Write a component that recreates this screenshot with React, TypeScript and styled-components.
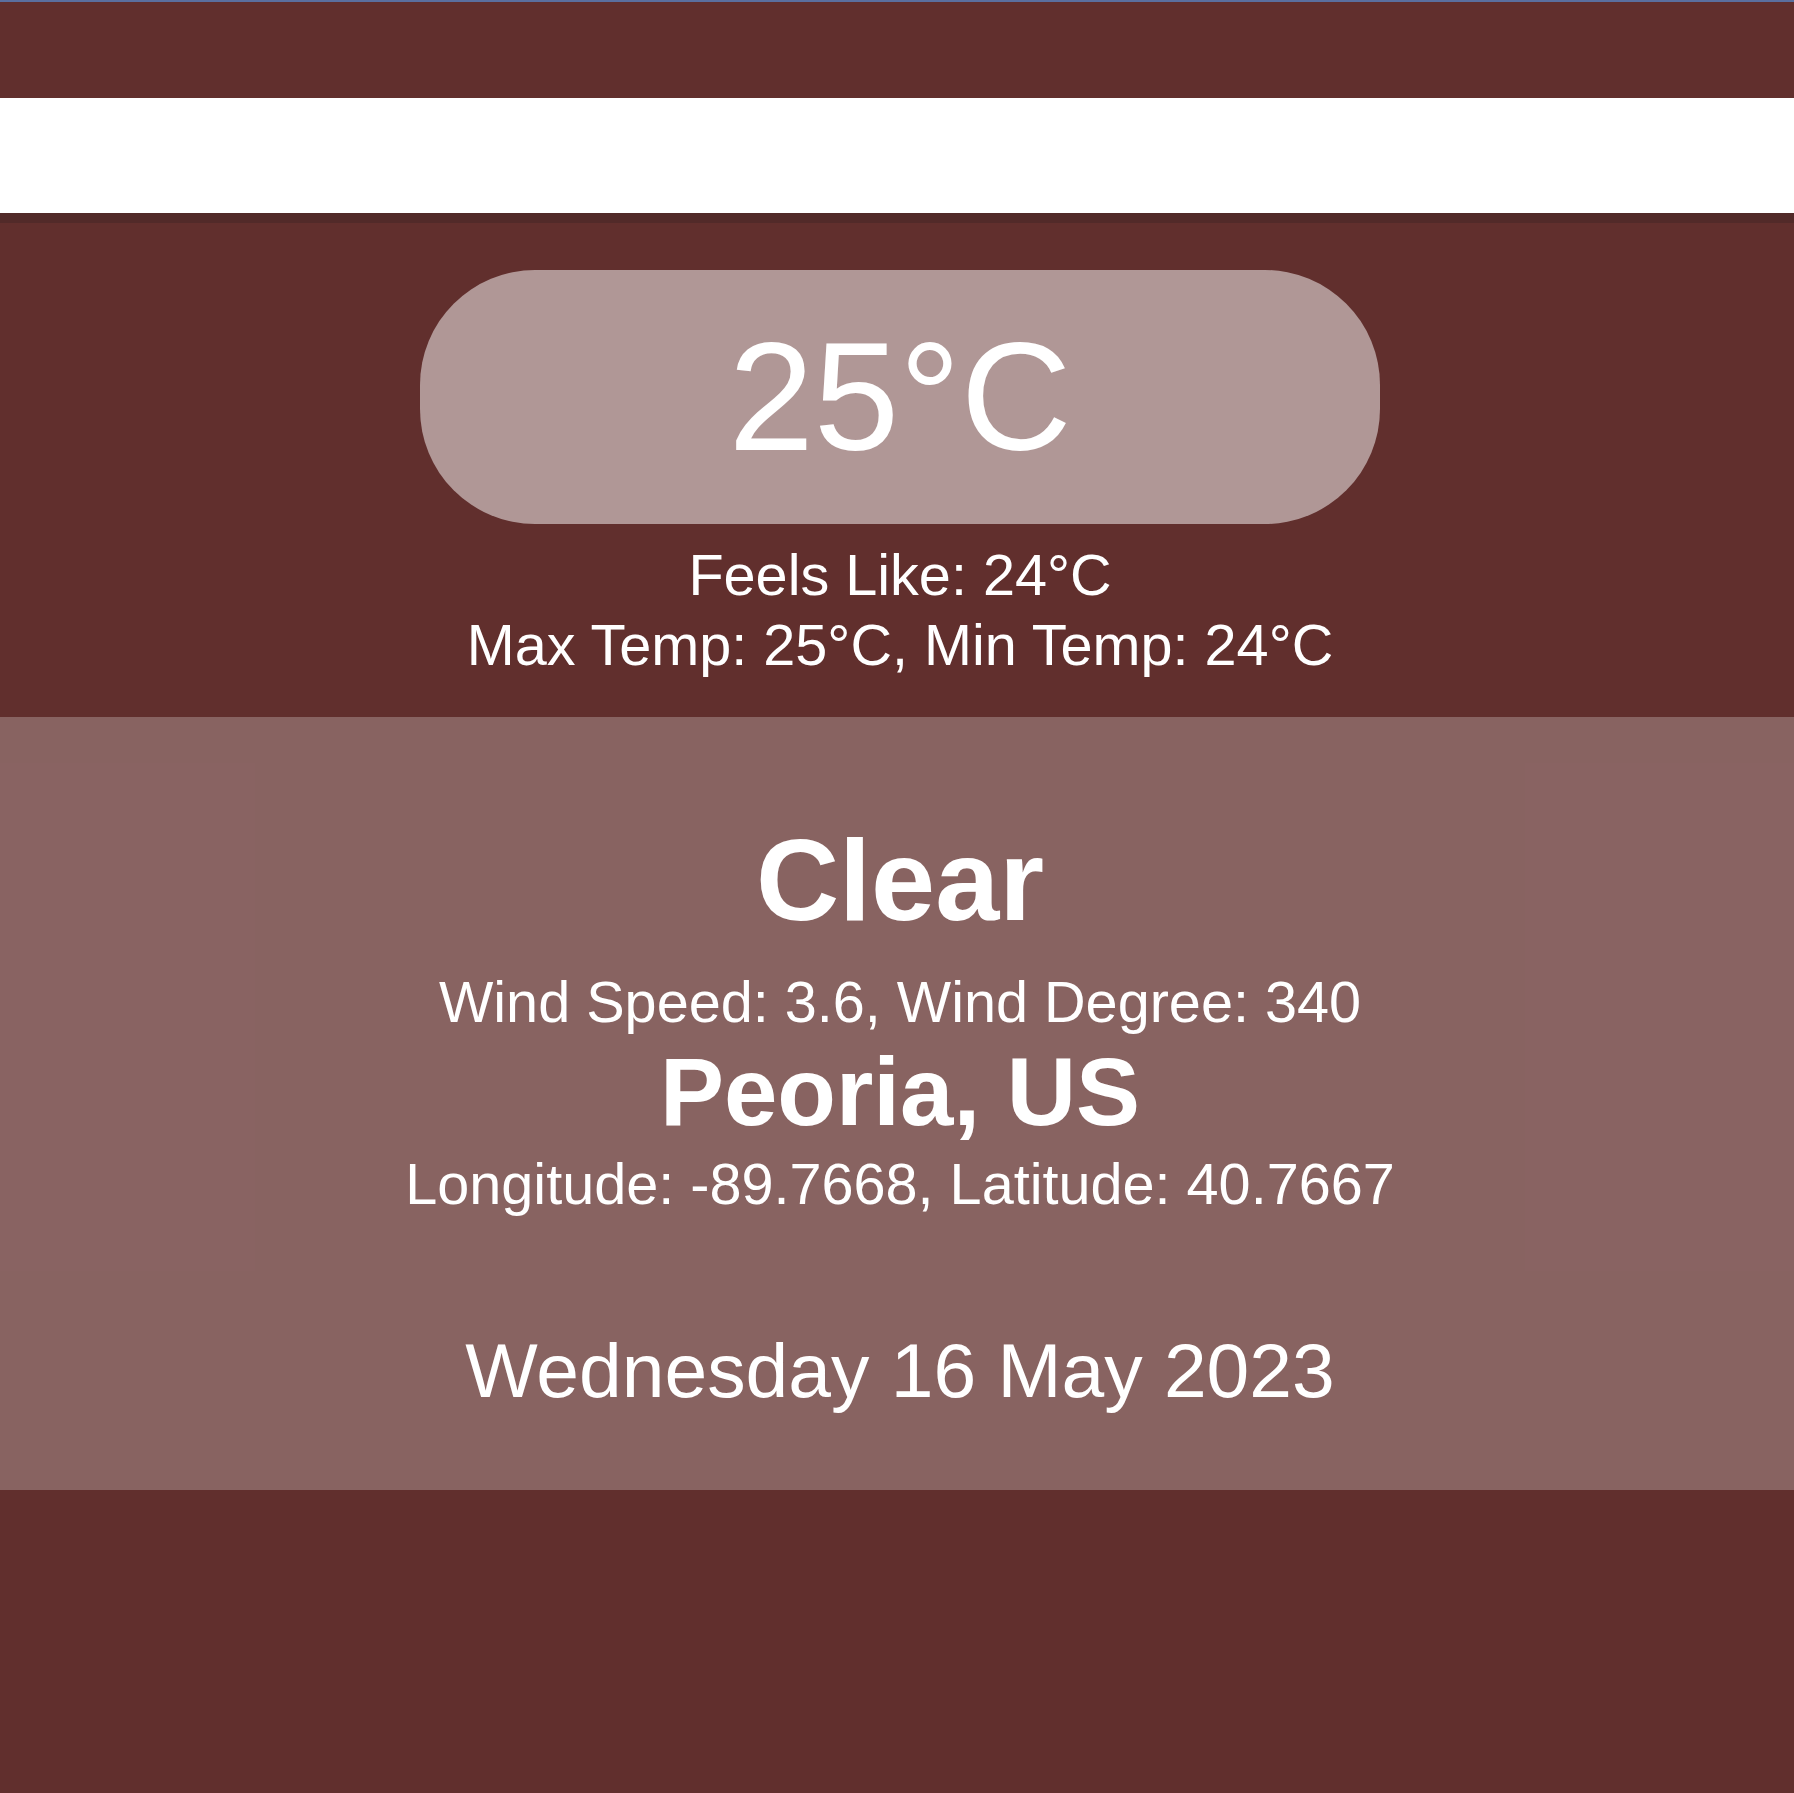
import React from "react";
import styled, { createGlobalStyle } from "styled-components";

const GlobalStyle = createGlobalStyle`
  html, body {
    margin: 0;
    padding: 0;
    background: #612f2d;
  }
  body {
    font-family: "Liberation Sans", Arial, sans-serif;
    color: #ffffff;
  }
  * { box-sizing: border-box; }
`;

const Page = styled.div`
  min-height: 100vh;
  display: flex;
  flex-direction: column;
  background: #612f2d;
`;

const TopBar = styled.header`
  height: 98px;
  border-top: 2px solid #5a6f9f;
  background: #612f2d;
`;

const SearchInput = styled.input`
  display: block;
  width: 100%;
  height: 125px;
  margin: 0;
  padding: 0 24px;
  border: none;
  border-bottom: 10px solid #522a29;
  background: #ffffff;
  background-clip: padding-box;
  outline: none;
  font-family: inherit;
  font-size: 40px;
  color: #612f2d;
`;

const CurrentSection = styled.section`
  display: flex;
  flex-direction: column;
  align-items: center;
  padding: 47px 0 39px 6px;
`;

const TempPill = styled.div`
  width: 960px;
  height: 254px;
  border-radius: 115px;
  background: rgba(255, 255, 255, 0.5);
  display: flex;
  align-items: center;
  justify-content: center;
  font-size: 153.6px;
  line-height: 1.15;
`;

const InfoLine = styled.p<{ $gap: number; $size?: number }>`
  margin: ${(p) => p.$gap}px 0 0;
  font-size: ${(p) => p.$size ?? 57.6}px;
  line-height: 1.15;
  text-align: center;
  white-space: nowrap;
`;

const DetailsSection = styled.section`
  display: flex;
  flex-direction: column;
  align-items: center;
  padding: 96.8px 0 76.5px 6px;
  background: rgba(255, 255, 255, 0.25);
`;

const Heading = styled.h2<{ $gap: number; $size: number }>`
  margin: ${(p) => p.$gap}px 0 0;
  font-size: ${(p) => p.$size}px;
  font-weight: 700;
  line-height: 1.15;
  text-align: center;
  white-space: nowrap;
`;

export default function App() {
  return (
    <>
      <GlobalStyle />
      <Page>
        <TopBar />
        <SearchInput type="text" aria-label="Search city" />
        <CurrentSection>
          <TempPill>25°C</TempPill>
          <InfoLine $gap={18}>Feels Like: 24°C</InfoLine>
          <InfoLine $gap={4}>Max Temp: 25°C, Min Temp: 24°C</InfoLine>
        </CurrentSection>
        <DetailsSection>
          <Heading $gap={0} $size={115.2}>Clear</Heading>
          <InfoLine $gap={22.3}>Wind Speed: 3.6, Wind Degree: 340</InfoLine>
          <Heading $gap={1.7} $size={96}>Peoria, US</Heading>
          <InfoLine $gap={3.5}>Longitude: -89.7668, Latitude: 40.7667</InfoLine>
          <InfoLine $gap={108.6} $size={76.8}>Wednesday 16 May 2023</InfoLine>
        </DetailsSection>
      </Page>
    </>
  );
}
